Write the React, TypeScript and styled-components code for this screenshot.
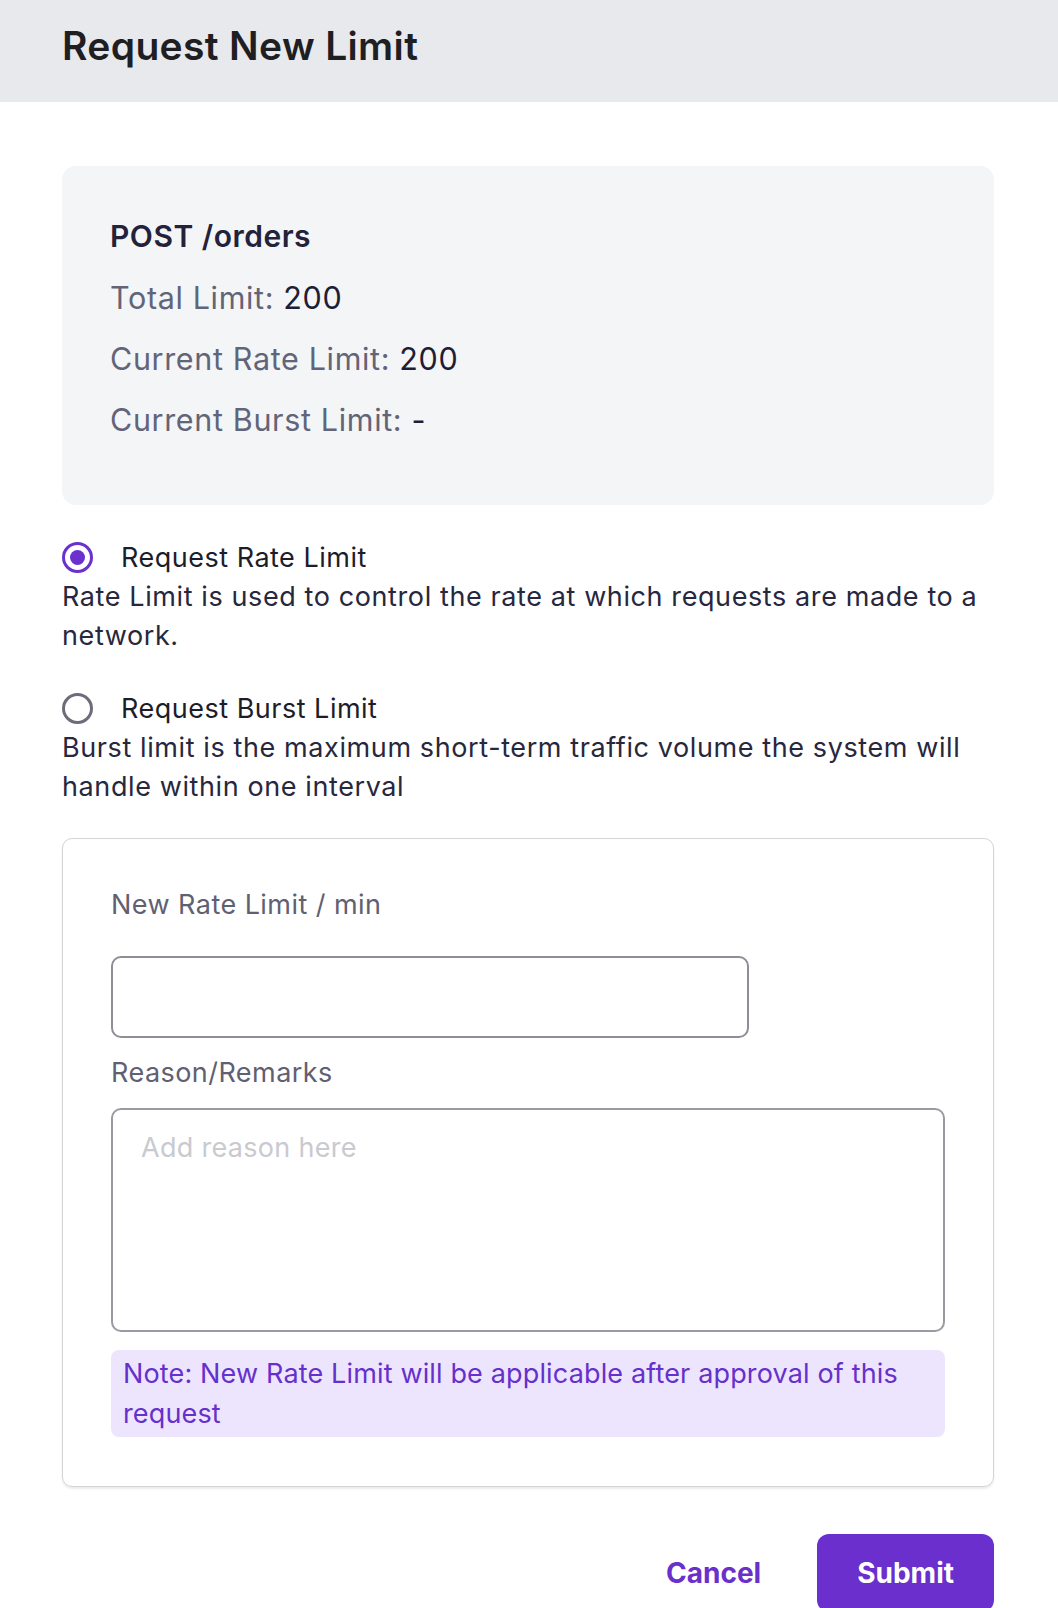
import React, { useState } from "react";
import styled, { createGlobalStyle } from "styled-components";

const Global = createGlobalStyle`
  html, body { margin: 0; padding: 0; background: #ffffff; }
  body { font-family: Inter, "Noto Sans", sans-serif; -webkit-font-smoothing: antialiased; }
  * { box-sizing: border-box; }
`;

const Page = styled.div`
  width: 1058px;
  min-height: 1608px;
  background: #ffffff;
  overflow: hidden;
`;

const Header = styled.header`
  height: 102px;
  background: #e8e9ec;
  display: flex;
  align-items: center;
  padding: 0 62px 12px;
`;

const Title = styled.h1`
  margin: 0;
  font-size: 39px;
  font-weight: 600;
  color: #1e1e23;
  letter-spacing: 0.35px;
`;

const Body = styled.main`
  display: flex;
  flex-direction: column;
  padding: 64px 64px 0 62px;
`;

const InfoCard = styled.section`
  background: #f4f5f7;
  border-radius: 14px;
  padding: 40px 48px 55px;
  display: flex;
  flex-direction: column;
`;

const InfoTitle = styled.div`
  font-size: 30px;
  line-height: 61px;
  font-weight: 600;
  color: #23223a;
  letter-spacing: 0.5px;
`;

const InfoRow = styled.div`
  font-size: 30.5px;
  line-height: 61px;
  color: #626478;
  letter-spacing: 0.65px;
`;

const InfoValue = styled.span`
  color: #201e36;
`;

const Options = styled.div`
  display: flex;
  flex-direction: column;
  gap: 33px;
  padding-top: 32px;
`;

const Option = styled.div`
  display: flex;
  flex-direction: column;
`;

const OptionHead = styled.label`
  display: flex;
  align-items: center;
  gap: 28px;
  height: 40px;
  font-size: 27px;
  color: #1d1d29;
  letter-spacing: 0.5px;
  cursor: pointer;
`;

const Radio = styled.span<{ $checked: boolean }>`
  width: 31px;
  height: 31px;
  border-radius: 50%;
  border: 3px solid ${(p) => (p.$checked ? "#6b30d0" : "#6d6d79")};
  display: flex;
  align-items: center;
  justify-content: center;
  flex-shrink: 0;
  &::after {
    content: "";
    width: 15px;
    height: 15px;
    border-radius: 50%;
    background: ${(p) => (p.$checked ? "#6b30d0" : "transparent")};
  }
`;

const OptionDesc = styled.p`
  margin: 0;
  font-size: 27px;
  line-height: 39px;
  color: #27273d;
  letter-spacing: 0.6px;
`;

const FormCard = styled.section`
  margin-top: 32px;
  border: 1.5px solid #d4d4d8;
  border-radius: 10px;
  box-shadow: 0 2px 2px rgba(0, 0, 0, 0.08);
  padding: 46px 48px 49px;
  display: flex;
  flex-direction: column;
`;

const FieldLabel = styled.label<{ $gap: number }>`
  font-size: 27px;
  line-height: 40px;
  color: #5f6071;
  letter-spacing: 0.45px;
  margin-bottom: ${(p) => p.$gap}px;
`;

const TextInput = styled.input`
  width: 638px;
  height: 82px;
  border: 2px solid #8e8e96;
  border-radius: 10px;
  font-size: 27px;
  padding: 0 28px;
  font-family: inherit;
  margin-bottom: 15px;
  outline: none;
`;

const TextArea = styled.textarea`
  width: 100%;
  height: 224px;
  border: 2px solid #9a9aa1;
  border-radius: 10px;
  font-size: 27px;
  line-height: 40px;
  padding: 18px 28px;
  font-family: inherit;
  letter-spacing: 0.3px;
  resize: none;
  outline: none;
  color: #1d1d29;
  &::placeholder { color: #c9cad0; }
`;

const Note = styled.div`
  margin-top: 18px;
  background: #ede5fd;
  border-radius: 8px;
  padding: 4px 12px 3px;
  font-size: 27px;
  line-height: 40px;
  color: #6530cc;
  letter-spacing: 0.15px;
`;

const Actions = styled.div`
  display: flex;
  justify-content: flex-end;
  align-items: center;
  gap: 16px;
  margin-top: 47px;
`;

const Button = styled.button<{ $primary?: boolean }>`
  height: 78px;
  padding: 0 40px;
  border: none;
  border-radius: 12px;
  font-family: inherit;
  font-size: 28px;
  font-weight: 700;
  cursor: pointer;
  background: ${(p) => (p.$primary ? "#6a2fcc" : "transparent")};
  color: ${(p) => (p.$primary ? "#ffffff" : "#6a30cc")};
`;

export default function App() {
  const [mode, setMode] = useState<"rate" | "burst">("rate");
  return (
    <Page>
      <Global />
      <Header>
        <Title>Request New Limit</Title>
      </Header>
      <Body>
        <InfoCard>
          <InfoTitle>POST /orders</InfoTitle>
          <InfoRow>
            Total Limit: <InfoValue>200</InfoValue>
          </InfoRow>
          <InfoRow>
            Current Rate Limit: <InfoValue>200</InfoValue>
          </InfoRow>
          <InfoRow>
            Current Burst Limit: <InfoValue>-</InfoValue>
          </InfoRow>
        </InfoCard>

        <Options>
          <Option>
            <OptionHead onClick={() => setMode("rate")}>
              <Radio $checked={mode === "rate"} />
              Request Rate Limit
            </OptionHead>
            <OptionDesc>
              Rate Limit is used to control the rate at which requests are made to a network.
            </OptionDesc>
          </Option>
          <Option>
            <OptionHead onClick={() => setMode("burst")}>
              <Radio $checked={mode === "burst"} />
              Request Burst Limit
            </OptionHead>
            <OptionDesc>
              Burst limit is the maximum short-term traffic volume the system will handle within one interval
            </OptionDesc>
          </Option>
        </Options>

        <FormCard>
          <FieldLabel $gap={31}>New Rate Limit / min</FieldLabel>
          <TextInput type="text" />
          <FieldLabel $gap={15}>Reason/Remarks</FieldLabel>
          <TextArea placeholder="Add reason here" />
          <Note>Note: New Rate Limit will be applicable after approval of this request</Note>
        </FormCard>

        <Actions>
          <Button>Cancel</Button>
          <Button $primary>Submit</Button>
        </Actions>
      </Body>
    </Page>
  );
}
